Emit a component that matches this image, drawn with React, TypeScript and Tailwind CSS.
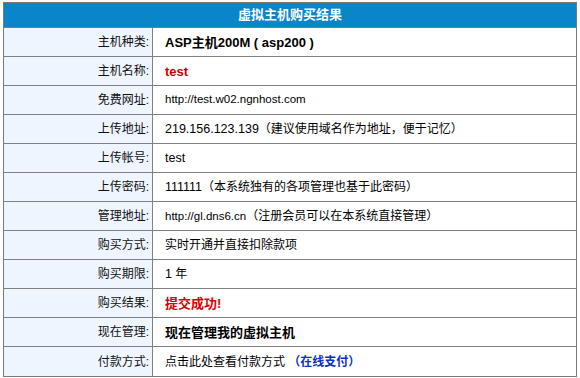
import React from "react";

const L = ({ children, className = "" }: { children: React.ReactNode; className?: string }) => (
  <span className={`text-[12.5px] ${className}`}>{children}</span>
);

const U = ({ children }: { children: React.ReactNode }) => (
  <span className="text-[11.5px]">{children}</span>
);

type Row = { label: string; value: React.ReactNode };

const rows: Row[] = [
  {
    label: "主机种类:",
    value: <span className="text-[13px] font-bold text-black">ASP主机200M ( asp200 )</span>,
  },
  {
    label: "主机名称:",
    value: <span className="text-[13px] font-bold text-[#cc0000]">test</span>,
  },
  {
    label: "免费网址:",
    value: <U>http://test.w02.ngnhost.com</U>,
  },
  {
    label: "上传地址:",
    value: (
      <span>
        <L>219.156.123.139</L>（建议使用域名作为地址，便于记忆）
      </span>
    ),
  },
  {
    label: "上传帐号:",
    value: <L>test</L>,
  },
  {
    label: "上传密码:",
    value: (
      <span>
        <L>111111</L>（本系统独有的各项管理也基于此密码）
      </span>
    ),
  },
  {
    label: "管理地址:",
    value: (
      <span>
        <U>http://gl.dns6.cn</U>（注册会员可以在本系统直接管理）
      </span>
    ),
  },
  {
    label: "购买方式:",
    value: <span>实时开通并直接扣除款项</span>,
  },
  {
    label: "购买期限:",
    value: (
      <span>
        <L>1</L> 年
      </span>
    ),
  },
  {
    label: "购买结果:",
    value: <span className="text-[13px] font-bold text-[#dd0000]">提交成功!</span>,
  },
  {
    label: "现在管理:",
    value: <span className="text-[13px] font-bold text-black">现在管理我的虚拟主机</span>,
  },
  {
    label: "付款方式:",
    value: (
      <span>
        点击此处查看付款方式 <span className="font-bold text-[#0b2fc4]">（在线支付）</span>
      </span>
    ),
  },
];

export default function App() {
  return (
    <div
      className="w-[580px] h-[378px] bg-white pt-[2px] pl-[3px] text-[12px] text-black"
      style={{ fontFamily: '"Liberation Sans", "Noto Sans CJK SC", sans-serif' }}
    >
      <div className="w-[574px] border border-[#7a7a7a] flex flex-col">
        <div className="h-[25px] bg-[#0a85c9] border-b border-[#6b7f8c] flex items-center justify-center text-white font-bold text-[13px]">
          虚拟主机购买结果
        </div>
        {rows.map((r, i) => (
          <div
            key={i}
            className={`flex h-[29px] ${i < rows.length - 1 ? "border-b border-[#808080]" : ""}`}
          >
            <div className="w-[149px] shrink-0 bg-[#eef5fe] border-r border-[#808080] flex items-center justify-end pr-[3px] text-[#111]">
              {r.label}
            </div>
            <div className="flex-1 flex items-center pl-[12px] leading-none whitespace-nowrap">
              {r.value}
            </div>
          </div>
        ))}
      </div>
    </div>
  );
}
